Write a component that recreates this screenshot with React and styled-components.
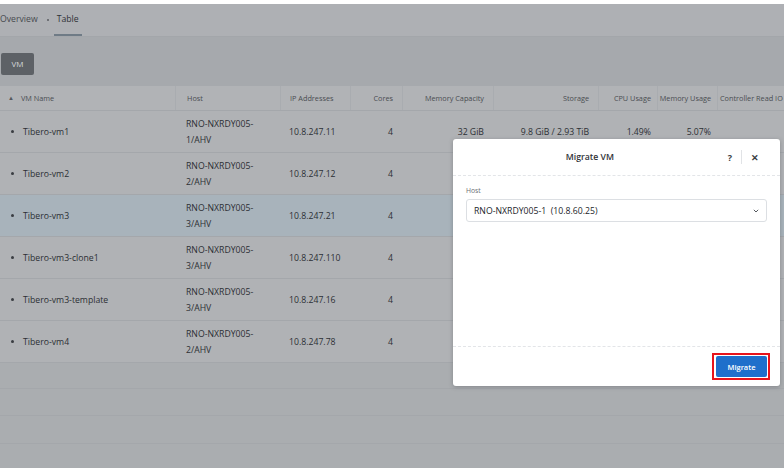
import React from "react";
import styled, { createGlobalStyle } from "styled-components";

const GlobalStyle = createGlobalStyle`
  html, body {
    margin: 0;
    padding: 0;
    background: #ffffff;
  }
  body {
    font-family: "Open Sans", "Liberation Sans", sans-serif;
  }
`;

const COLS = "175px 105px 70px 52px 91px 105px 59px 60px 90px";

const Page = styled.div`
  position: relative;
  width: 784px;
  height: 468px;
  overflow: hidden;
  background: #ffffff;
  display: flex;
  flex-direction: column;
  padding-top: 4px;
  box-sizing: border-box;
`;

const Screen = styled.div`
  flex: 1;
  display: flex;
  flex-direction: column;
  background: #a9acb0;
  margin-bottom: 2px;
`;

const TabBar = styled.div`
  height: 32px;
  display: flex;
  align-items: stretch;
  background: #aeb0b4;
  border-bottom: 1px solid #a3a6aa;
  font-size: 8.7px;
  color: #3b3e43;
`;

const Tab = styled.div`
  display: flex;
  align-items: center;
  padding: 0 ${(p) => p.$pad || 0}px;
  margin-left: ${(p) => p.$ml || 0}px;
  border-bottom: 2px solid ${(p) => (p.$active ? "#6f7b86" : "transparent")};
  color: ${(p) => (p.$active ? "#2e3136" : "#474a4f")};
`;

const Dot = styled.span`
  width: 2px;
  height: 2px;
  border-radius: 50%;
  background: #5a5d62;
  align-self: center;
  margin-left: 9px;
`;

const Toolbar = styled.div`
  height: 49px;
  display: flex;
  align-items: center;
  padding-left: 1px;
  background: #a6a9ad;
`;

const ToolButton = styled.div`
  width: 33px;
  height: 22px;
  border-radius: 2px;
  background: #5d6166;
  color: #d4d6d9;
  font-size: 8px;
  display: flex;
  align-items: center;
  justify-content: center;
  margin-top: 4px;
`;

const Table = styled.div`
  display: flex;
  flex-direction: column;
`;

const Row = styled.div`
  display: grid;
  grid-template-columns: ${COLS};
  height: ${(p) => p.$h}px;
  background: ${(p) => p.$bg || "#b0b2b5"};
  border-bottom: 1px solid #a4a7ab;
  box-sizing: border-box;
  font-size: ${(p) => (p.$head ? "7.3px" : "8.7px")};
  color: ${(p) => (p.$head ? "#4a4d52" : "#2c2f34")};
`;

const Cell = styled.div`
  display: flex;
  align-items: center;
  justify-content: ${(p) => (p.$right ? "flex-end" : "flex-start")};
  padding: 0 ${(p) => (p.$right ? p.$pr || 9 : 0)}px 0 ${(p) => p.$pl || 0}px;
  border-left: ${(p) => (p.$divider ? "1px solid #a9acb0" : "none")};
  white-space: nowrap;
  overflow: hidden;
  line-height: 16px;
`;

const HostText = styled.div`
  white-space: normal;
  line-height: 16px;
`;

const Bullet = styled.span`
  width: 3px;
  height: 3px;
  border-radius: 50%;
  background: #3a3d42;
  margin: 0 9px 0 11px;
`;

const Caret = styled.span`
  font-size: 6px;
  margin: 0 7px 0 8px;
  color: #55585d;
`;

const Modal = styled.div`
  position: absolute;
  left: 453px;
  top: 139px;
  width: 327px;
  height: 247px;
  background: #ffffff;
  border-radius: 3px;
  box-shadow: 0 1px 4px rgba(60, 64, 70, 0.35);
  display: flex;
  flex-direction: column;
`;

const ModalHeader = styled.div`
  height: 36px;
  display: flex;
  align-items: center;
  border-bottom: 1px dashed #e3e5e8;
`;

const ModalTitle = styled.div`
  flex: 1;
  text-align: center;
  font-size: 8.7px;
  font-weight: 600;
  color: #2f3237;
  padding-left: 8px;
`;

const HeaderIcons = styled.div`
  display: flex;
  align-items: center;
  height: 100%;
  padding-right: 12px;
`;

const IconBtn = styled.div`
  display: flex;
  align-items: center;
  justify-content: center;
  font-size: 9px;
  font-weight: 700;
  color: #3a3d42;
  padding: 0 ${(p) => p.$px}px;
  height: 14px;
  border-left: ${(p) => (p.$sep ? "1px solid #e1e3e6" : "none")};
`;

const ModalBody = styled.div`
  flex: 1;
  padding: 10px 13px 0 13px;
  border-bottom: 1px dashed #e3e5e8;
`;

const Label = styled.div`
  font-size: 6.8px;
  color: #6b6f75;
  margin-bottom: 4px;
`;

const Select = styled.div`
  height: 23px;
  border: 1px solid #dcdfe3;
  border-radius: 3px;
  box-sizing: border-box;
  display: flex;
  align-items: center;
  justify-content: space-between;
  padding: 0 7px;
  font-size: 8.7px;
  color: #22252a;
  white-space: pre;
`;

const ModalFooter = styled.div`
  height: 39px;
  display: flex;
  align-items: center;
  justify-content: flex-end;
  padding-right: 10px;
`;

const Highlight = styled.div`
  border: 2px solid #e8141b;
  padding: 1px 1px 1px 2px;
`;

const PrimaryButton = styled.div`
  width: 51px;
  height: 21px;
  background: #1f6fcb;
  color: #ffffff;
  border-radius: 2px;
  font-size: 7.5px;
  font-weight: 600;
  display: flex;
  align-items: center;
  justify-content: center;
`;

const headers = [
  { label: "VM Name", caret: true },
  { label: "Host", pl: 11, divider: true },
  { label: "IP Addresses", pl: 9, divider: true },
  { label: "Cores", right: true, divider: true },
  { label: "Memory Capacity", right: true, divider: true },
  { label: "Storage", right: true, divider: true },
  { label: "CPU Usage", right: true, pr: 6, divider: true },
  { label: "Memory Usage", right: true, pr: 6, divider: true },
  { label: "Controller Read IO", pl: 2, divider: true },
];

const vms = [
  { name: "Tibero-vm1", host: "1/AHV", ip: "10.8.247.11", mem: "32 GiB", storage: "9.8 GiB / 2.93 TiB", cpu: "1.49%", memu: "5.07%" },
  { name: "Tibero-vm2", host: "2/AHV", ip: "10.8.247.12" },
  { name: "Tibero-vm3", host: "3/AHV", ip: "10.8.247.21", selected: true },
  { name: "Tibero-vm3-clone1", host: "3/AHV", ip: "10.8.247.110" },
  { name: "Tibero-vm3-template", host: "3/AHV", ip: "10.8.247.16" },
  { name: "Tibero-vm4", host: "2/AHV", ip: "10.8.247.78" },
];

const ChevronDown = () => (
  <svg width="6" height="4" viewBox="0 0 6 4">
    <path d="M0.8 0.8 L3 3 L5.2 0.8" fill="none" stroke="#55595e" strokeWidth="1" />
  </svg>
);

export default function App() {
  return (
    <>
      <GlobalStyle />
      <Page>
        <Screen>
          <TabBar>
            <Tab>Overview</Tab>
            <Dot />
            <Tab $active $pad={3} $ml={5}>Table</Tab>
          </TabBar>
          <Toolbar>
            <ToolButton>VM</ToolButton>
          </Toolbar>
          <Table>
            <Row $head $h={25} $bg="#b1b3b6">
              {headers.map((h) => (
                <Cell key={h.label} $right={h.right} $pr={h.pr} $pl={h.pl} $divider={h.divider}>
                  {h.caret && <Caret>▲</Caret>}
                  {h.label}
                </Cell>
              ))}
            </Row>
            {vms.map((vm) => (
              <Row key={vm.name} $h={42} $bg={vm.selected ? "#a8b3bb" : "#b0b2b5"}>
                <Cell>
                  <Bullet />
                  {vm.name}
                </Cell>
                <Cell $pl={11}>
                  <HostText>
                    RNO-NXRDY005-
                    <br />
                    {vm.host}
                  </HostText>
                </Cell>
                <Cell $pl={9}>{vm.ip}</Cell>
                <Cell $right>4</Cell>
                <Cell $right>{vm.mem || ""}</Cell>
                <Cell $right>{vm.storage || ""}</Cell>
                <Cell $right $pr={6}>{vm.cpu || ""}</Cell>
                <Cell $right $pr={6}>{vm.memu || ""}</Cell>
                <Cell />
              </Row>
            ))}
            {[26, 27, 28, 27].map((h, i) => (
              <Row key={i} $h={h} $bg="#aaadb0" />
            ))}
          </Table>
        </Screen>

        <Modal>
          <ModalHeader>
            <ModalTitle>Migrate VM</ModalTitle>
            <HeaderIcons>
              <IconBtn $px={9}>?</IconBtn>
              <IconBtn $px={9} $sep>✕</IconBtn>
            </HeaderIcons>
          </ModalHeader>
          <ModalBody>
            <Label>Host</Label>
            <Select>
              <span>RNO-NXRDY005-1  (10.8.60.25)</span>
              <ChevronDown />
            </Select>
          </ModalBody>
          <ModalFooter>
            <Highlight>
              <PrimaryButton>Migrate</PrimaryButton>
            </Highlight>
          </ModalFooter>
        </Modal>
      </Page>
    </>
  );
}
